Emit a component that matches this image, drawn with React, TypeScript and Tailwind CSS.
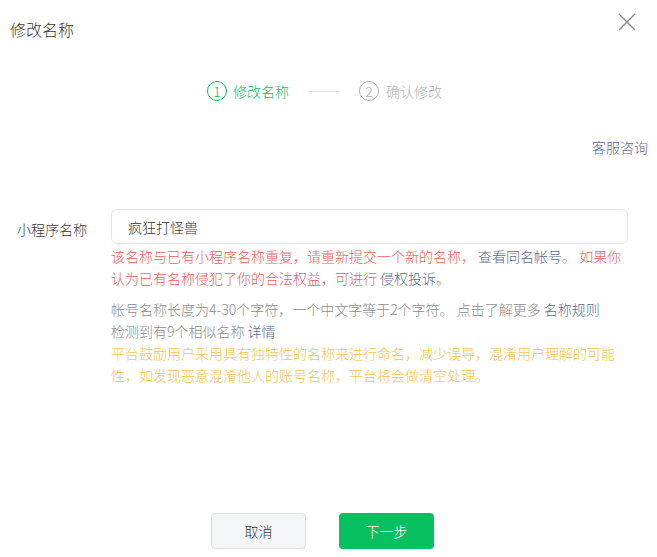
import * as React from 'react';

function CloseIcon() {
  return (
    <svg width="18" height="18" viewBox="0 0 18 18" fill="none">
      <path d="M1 1L17 17M17 1L1 17" stroke="#8c8c8c" strokeWidth="1.4" />
    </svg>
  );
}

function Step({ n, label, active }: { n: number; label: string; active?: boolean }) {
  return (
    <div className="flex items-center">
      <span
        className={
          active
            ? 'flex h-[20px] w-[20px] items-center justify-center rounded-full border border-[#07c160] text-[14px] leading-none text-[#07c160]'
            : 'flex h-[20px] w-[20px] items-center justify-center rounded-full border border-[#b2b2b2] text-[14px] leading-none text-[#b2b2b2]'
        }
      >
        {n}
      </span>
      <span className={active ? 'ml-[6px] text-[14px] leading-[24px] text-[#07c160]' : 'ml-[7px] text-[14px] leading-[24px] text-[#b2b2b2]'}>
        {label}
      </span>
    </div>
  );
}

export default function App() {
  const [name, setName] = React.useState('疯狂打怪兽');

  return (
    <div
      className="flex h-[557px] w-[657px] flex-col bg-white font-light"
      style={{ fontFamily: '"Noto Sans CJK SC", "Noto Sans", sans-serif' }}
    >
      <div className="flex justify-between pl-[10px] pr-[21px]">
        <h1 className="mt-[17px] text-[16px] leading-[24px] text-[#353535]">修改名称</h1>
        <button className="mt-[13px] h-[18px] w-[18px]">
          <CloseIcon />
        </button>
      </div>

      <div className="mt-[38px] flex items-center justify-center pr-[8px]">
        <Step n={1} label="修改名称" active />
        <span className="mx-[20px] h-px w-[30px] bg-[#e5e5e5]" />
        <Step n={2} label="确认修改" />
      </div>

      <div className="mt-[33px] pr-[9px] text-right text-[14px] leading-[22px] text-[#576b95]">
        <a href="#">客服咨询</a>
      </div>

      <div className="mt-[51px] flex">
        <label className="w-[111px] pl-[17px] pt-[9px] text-[14px] leading-[22px] text-[#353535]">小程序名称</label>
        <div className="w-[517px]">
          <input
            className="h-[35px] w-full rounded-[6px] border border-[#e5e5e5] px-[16px] text-[14px] text-[#353535] outline-none"
            value={name}
            onChange={(e) => setName(e.target.value)}
          />
          <p className="mt-[1px] text-[14px] leading-[22px] text-[#f15c5c]">
            该名称与已有小程序名称重复，请重新提交一个新的名称， <a href="#" className="text-[#576b95]">查看同名帐号</a>。 如果你认为已有名称侵犯了你的合法权益，可进行 <a href="#" className="text-[#576b95]">侵权投诉</a>。
          </p>
          <p className="mt-[9px] text-[14px] leading-[22px] text-[#8c8c8c]">
            帐号名称长度为4-30个字符，一个中文字等于2个字符。 点击了解更多 <a href="#" className="text-[#576b95]">名称规则</a>
          </p>
          <p className="text-[14px] leading-[22px] text-[#8c8c8c]">
            检测到有9个相似名称 <a href="#" className="text-[#576b95]">详情</a>
          </p>
          <p className="text-[14px] leading-[22px] text-[#f8c34c]">
            平台鼓励用户采用具有独特性的名称来进行命名，减少误导，混淆用户理解的可能性，如发现恶意混淆他人的账号名称，平台将会做清空处理。
          </p>
        </div>
      </div>

      <div className="mt-auto flex justify-center gap-[33px] pb-[8px] pr-[12px]">
        <button className="h-[36px] w-[95px] rounded-[4px] border border-[#e0e0e0] bg-[#f4f5f7] text-[14px] text-[#353535]">
          取消
        </button>
        <button className="h-[36px] w-[95px] rounded-[4px] bg-[#07c160] text-[14px] text-white">
          下一步
        </button>
      </div>
    </div>
  );
}
